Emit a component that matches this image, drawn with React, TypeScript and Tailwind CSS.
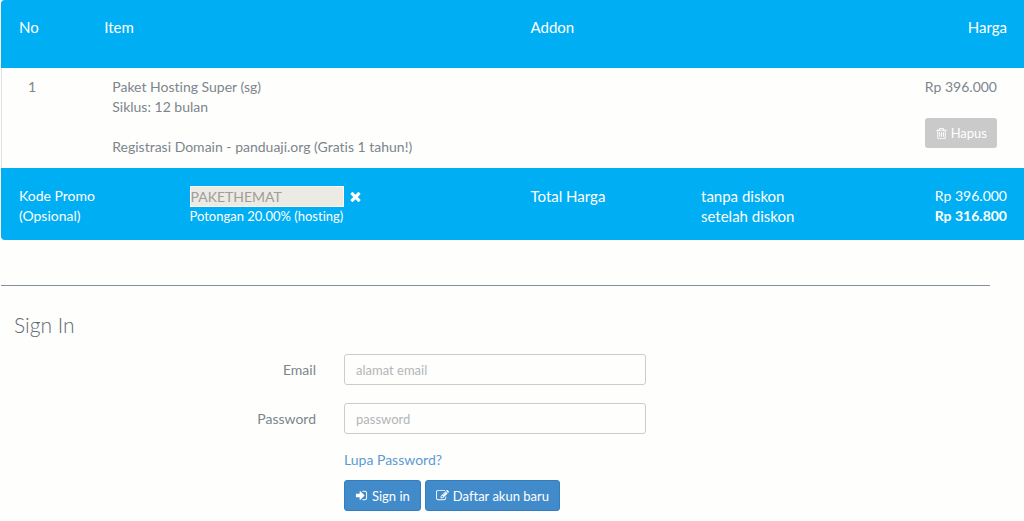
import React from 'react';

const ICONS = {
  times:
    'M1490 1322q0 40-28 68l-136 136q-28 28-68 28t-68-28l-294-294-294 294q-28 28-68 28t-68-28l-136-136q-28-28-28-68t28-68l294-294-294-294q-28-28-28-68t28-68l136-136q28-28 68-28t68 28l294 294 294-294q28-28 68-28t68 28l136 136q28 28 28 68t-28 68l-294 294 294 294q28 28 28 68z',
  trash:
    'M704 736v576q0 14-9 23t-23 9h-64q-14 0-23-9t-9-23v-576q0-14 9-23t23-9h64q14 0 23 9t9 23zm256 0v576q0 14-9 23t-23 9h-64q-14 0-23-9t-9-23v-576q0-14 9-23t23-9h64q14 0 23 9t9 23zm256 0v576q0 14-9 23t-23 9h-64q-14 0-23-9t-9-23v-576q0-14 9-23t23-9h64q14 0 23 9t9 23zm128 724v-948h-896v948q0 22 7 40.5t14.5 27 10.5 8.5h832q3 0 10.5-8.5t14.5-27 7-40.5zm-672-1076h448l-48-117q-7-9-17-11h-317q-10 2-17 11zm928 32v64q0 14-9 23t-23 9h-96v948q0 83-47 143.5t-113 60.5h-832q-66 0-113-58.5t-47-141.5v-952h-96q-14 0-23-9t-9-23v-64q0-14 9-23t23-9h309l70-167q15-37 54-63t79-26h320q40 0 79 26t54 63l70 167h309q14 0 23 9t9 23z',
  signIn:
    'M1312 896q0 26-19 45l-544 544q-19 19-45 19t-45-19-19-45v-288h-448q-26 0-45-19t-19-45v-384q0-26 19-45t45-19h448v-288q0-26 19-45t45-19 45 19l544 544q19 19 19 45zm352-352v704q0 119-84.5 203.5t-203.5 84.5h-320q-13 0-22.5-9.5t-9.5-22.5q0-4-1-20t-.5-26.5 3-23.5 10-19.5 20.5-6.5h320q66 0 113-47t47-113v-704q0-66-47-113t-113-47h-312l-11.5-1-11.5-3-8-5.5-7-9-2-13.5q0-4-1-20t-.5-26.5 3-23.5 10-19.5 20.5-6.5h320q119 0 203.5 84.5t84.5 203.5z',
  edit:
    'M888 1184l116-116-152-152-116 116v56h96v96h56zm440-720q-16-16-33 1l-350 350q-17 17-1 33t33-1l350-350q17-17 1-33zm80 594v190q0 119-84.5 203.5t-203.5 84.5h-832q-119 0-203.5-84.5t-84.5-203.5v-832q0-119 84.5-203.5t203.5-84.5h832q63 0 117 25 15 7 18 23 3 17-9 29l-49 49q-14 14-32 8-23-6-45-6h-832q-66 0-113 47t-47 113v832q0 66 47 113t113 47h832q66 0 113-47t47-113v-126q0-13 9-22l64-64q15-15 35-7t20 29zm-96-738l288 288-672 672h-288v-288zm444 132l-92 92-288-288 92-92q28-28 68-28t68 28l152 152q28 28 28 68t-28 68z',
};

interface IconProps {
  name: keyof typeof ICONS;
  className?: string;
}

const Icon: React.FC<IconProps> = ({ name, className }) => (
  <svg viewBox="0 0 1792 1792" fill="currentColor" aria-hidden="true" className={className}>
    <path d={ICONS[name]} />
  </svg>
);

const OrderTable: React.FC = () => (
  <table className="w-full table-fixed border-separate border-spacing-0 text-left align-top text-[15px] leading-5">
    <colgroup>
      <col className="w-1/12" />
      <col className="w-1/12" />
      <col className="w-4/12" />
      <col className="w-2/12" />
      <col className="w-2/12" />
      <col className="w-2/12" />
    </colgroup>
    <thead className="bg-[#00aef3] text-white">
      <tr className="h-[68px] align-top">
        <th className="rounded-tl-sm px-[18px] pt-[17px] font-normal">No</th>
        <th colSpan={2} className="px-[18px] pt-[17px] font-normal">Item</th>
        <th colSpan={2} className="px-[18px] pt-[17px] font-normal">Addon</th>
        <th className="px-[17px] pt-[17px] text-right font-normal">Harga</th>
      </tr>
    </thead>
    <tbody className="text-[14px] text-[#7d858c]">
      <tr className="h-[100px] align-top">
        <td className="border-l border-[#dde1e3] px-[26px] pt-[9px]">1</td>
        <td colSpan={2} className="px-[26px] pt-[9px]">
          <p>Paket Hosting Super (sg)</p>
          <p>Siklus: 12 bulan</p>
          <p className="mt-5">Registrasi Domain - panduaji.org (Gratis 1 tahun!)</p>
        </td>
        <td colSpan={2} />
        <td className="px-[27px] pt-[9px] text-right">
          <p>Rp 396.000</p>
          <button
            type="button"
            className="mt-[21px] inline-flex h-[30px] items-center gap-[3px] rounded-[3px] bg-[#c9cac9] px-[10px] text-[13px] text-white"
          >
            <Icon name="trash" className="size-[13px]" />
            Hapus
          </button>
        </td>
      </tr>
    </tbody>
    <tfoot className="bg-[#00aef3] text-white">
      <tr className="h-[72px] align-top">
        <td colSpan={2} className="rounded-bl-sm px-[18px] pt-[18px] text-[14px]">
          <label htmlFor="promo">
            Kode Promo
            <br />
            (Opsional)
          </label>
        </td>
        <td className="px-[18px] pt-[18px] text-[14px]">
          <div className="flex h-5 items-center gap-1">
            <input
              id="promo"
              defaultValue="PAKETHEMAT"
              readOnly
              className="h-[21px] w-[154px] border border-white bg-[#ebebe4] text-[#a09c9a]"
            />
            <button type="button" aria-label="Hapus kode promo">
              <Icon name="times" className="size-[15px]" />
            </button>
          </div>
          <p className="text-[13px] leading-5">Potongan 20.00% (hosting)</p>
        </td>
        <td className="px-[18px] pt-[18px]">Total Harga</td>
        <td className="px-[18px] pt-[18px]">
          <p>tanpa diskon</p>
          <p>setelah diskon</p>
        </td>
        <td className="px-[17px] pt-[18px] text-right text-[14px]">
          <p>Rp 396.000</p>
          <p className="font-bold">Rp 316.800</p>
        </td>
      </tr>
    </tfoot>
  </table>
);

interface FieldProps {
  id: string;
  label: string;
  type: string;
  placeholder: string;
}

const Field: React.FC<FieldProps> = ({ id, label, type, placeholder }) => (
  <div className="mb-[18px] grid grid-cols-3 items-center">
    <label htmlFor={id} className="px-[14px] text-right">
      {label}
    </label>
    <div className="px-[14px]">
      <input
        id={id}
        type={type}
        placeholder={placeholder}
        className="block h-[31px] w-full rounded-[3px] border border-[#cccccc] bg-transparent px-[11px] text-[13px] placeholder:text-[#b3b6b8]"
      />
    </div>
  </div>
);

const SignIn: React.FC = () => (
  <section className="mr-[34px] text-[14px] leading-5 text-[#7d858c]">
    <hr className="mt-[45px] ml-px border-[#84909a]" />
    <h2 className="mt-[25px] px-[14px] text-[21px] leading-7 font-light text-[#5f6a72]">Sign In</h2>
    <form className="mt-[15px]" onSubmit={(e) => e.preventDefault()}>
      <Field id="email" label="Email" type="email" placeholder="alamat email" />
      <Field id="password" label="Password" type="password" placeholder="password" />
      <div className="grid grid-cols-3">
        <div className="col-span-2 col-start-2 px-[14px]">
          <a href="#" className="block leading-4 text-[#5b9bd3]">
            Lupa Password?
          </a>
          <div className="mt-3 flex gap-1 text-[13px] text-white">
            <button
              type="submit"
              className="flex h-[31px] items-center gap-1 rounded-[3px] border border-[#357ebd] bg-[#428bca] px-[10px]"
            >
              <Icon name="signIn" className="size-[13px]" />
              Sign in
            </button>
            <button
              type="button"
              className="flex h-[31px] items-center gap-1 rounded-[3px] border border-[#357ebd] bg-[#428bca] px-[10px]"
            >
              <Icon name="edit" className="size-[13px]" />
              Daftar akun baru
            </button>
          </div>
        </div>
      </div>
    </form>
  </section>
);

export default function App() {
  return (
    <main className="min-h-screen bg-[#fefefd] font-['Lato',sans-serif] [font-variant-ligatures:none]">
      <div className="pl-px">
        <OrderTable />
      </div>
      <SignIn />
    </main>
  );
}
